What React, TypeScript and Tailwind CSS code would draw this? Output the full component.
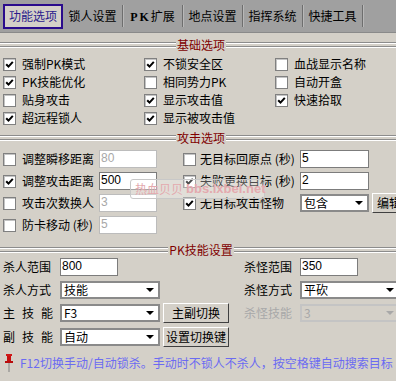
import type { ReactNode } from 'react';

const tabs = ['功能选项', '锁人设置', 'PK扩展', '地点设置', '指挥系统', '快捷工具'];

// 经典 Win32 复选框
function Check({ on }: { on?: boolean }) {
  return (
    <span className="w-[13px] h-[13px] shrink-0 bg-white border border-[#808080] shadow-[inset_1px_1px_0_#c4c4c4] flex items-center justify-center">
      {on && (
        <svg width="9" height="9" viewBox="0 0 9 9">
          <path d="M1.2 4.2 L3.5 6.6 L7.8 1.8" stroke="#000" strokeWidth="2" fill="none" />
        </svg>
      )}
    </span>
  );
}

function Etch() {
  return (
    <div className="flex-1 flex flex-col gap-[2px]">
      <div className="h-[2px] border-t border-t-[#8c8c8c] border-b border-b-white" />
      <div className="h-[2px] border-t border-t-[#8c8c8c] border-b border-b-white" />
    </div>
  );
}

function Header({ title }: { title: string }) {
  return (
    <div className="flex items-center h-[14px]">
      <Etch />
      <span className="text-[#800000] px-[1px]">{title}</span>
      <Etch />
    </div>
  );
}

function TextBox({ value, w, disabled }: { value: string; w: string; disabled?: boolean }) {
  return (
    <div
      className={`${w} h-[18px] shrink-0 bg-white border px-[1px] leading-[15px] font-['Liberation_Sans',sans-serif] text-[12px] ${
        disabled ? 'border-[#bcbcbc] text-[#a8a8a8]' : 'border-[#7c7c7c] text-black'
      }`}
    >
      {value}
    </div>
  );
}

function Select({ value, w, disabled }: { value: string; w: string; disabled?: boolean }) {
  return (
    <div
      className={`${w} h-[18px] shrink-0 border-2 flex items-center justify-between pl-[2px] pr-[4px] ${
        disabled ? 'bg-[#d4d0c8] border-[#c4c4c4] text-[#a8a8a8]' : 'bg-white border-[#8a8a8a] text-black'
      }`}
    >
      <span className="leading-[14px]">{value}</span>
      <svg width="8" height="4" viewBox="0 0 8 4">
        <path d="M0 0 H8 L4 4 Z" fill={disabled ? '#a8a8a8' : '#000'} />
      </svg>
    </div>
  );
}

function Btn({ children, w }: { children: ReactNode; w: string }) {
  return (
    <div className={`${w} h-[20px] shrink-0 bg-[#d4d0c8] border border-t-white border-l-white border-b-[#404040] border-r-[#404040] flex items-center justify-center`}>
      {children}
    </div>
  );
}

function Spaced({ text }: { text: string }) {
  return (
    <span className="w-[50px] flex justify-between">
      {text.split('').map((c, i) => (
        <span key={i}>{c}</span>
      ))}
    </span>
  );
}

const basic: [string, boolean][][] = [
  [['强制PK模式', true], ['不锁安全区', true], ['血战显示名称', false]],
  [['PK技能优化', true], ['相同势力PK', false], ['自动开盒', false]],
  [['贴身攻击', false], ['显示攻击值', true], ['快速拾取', true]],
  [['超远程锁人', true], ['显示被攻击值', true]],
];

export default function App() {
  return (
    <div className="w-[396px] h-[381px] overflow-hidden bg-[#d4d0c8] text-[12px] leading-[14px] text-black font-['Noto_Sans_CJK_SC',sans-serif]">
      {/* 标签栏 */}
      <div className="h-[33px] bg-[#a0a0a0] border-b border-[#8a8a8a] flex items-center pl-[3px]">
        {tabs.map((t, i) =>
          i === 0 ? (
            <div key={t} className="w-[60px] h-[25px] bg-[#d4d0c8] border-2 border-[#2a0c8c] text-[#2a1a8c] flex items-center justify-center">
              {t}
            </div>
          ) : (
            <div key={t} className="w-[60px] h-[22px] flex items-center justify-center border-r border-[#6e6e6e] shadow-[1px_0_0_#b8b8b8]">
              {t === 'PK扩展' ? (
                <span>
                  <b className="font-['Liberation_Serif',serif] tracking-[2px]">PK</b>扩展
                </span>
              ) : (
                t
              )}
            </div>
          )
        )}
      </div>

      <div className="w-[402px]">
        {/* 基础选项 */}
        <div className="mt-[5px]">
          <Header title="基础选项" />
        </div>
        <div className="mt-[3px] pl-[3px] grid grid-cols-[141px_131px_1fr]">
          {basic.flatMap((row, r) =>
            row.map(([label, on], c) => (
              <div key={`${r}-${c}`} className="h-[18px] flex items-center gap-[6px]">
                <Check on={on} />
                <span>{label}</span>
              </div>
            ))
          )}
        </div>

        {/* 攻击选项 */}
        <div className="mt-[4px]">
          <Header title="攻击选项" />
        </div>
        <div className="relative mt-[3px] pl-[3px]">
          {[
            { l: '调整瞬移距离', lv: '80', ld: true, lon: false, r: '无目标回原点 (秒)', ron: false, rc: <TextBox value="5" w="w-[69px]" /> },
            { l: '调整攻击距离', lv: '500', ld: false, lon: true, r: '失败更换目标 (秒)', ron: true, rc: <TextBox value="2" w="w-[69px]" /> },
            {
              l: '攻击次数换人', lv: '3', ld: true, lon: false, r: '无目标攻击怪物', ron: true,
              rc: (
                <div className="flex items-center gap-[3px]">
                  <Select value="包含" w="w-[69px]" />
                  <Btn w="w-[34px]">编辑</Btn>
                </div>
              ),
            },
            { l: '防卡移动 (秒)', lv: '5', ld: true, lon: false },
          ].map((row) => (
            <div key={row.l} className="h-[22px] flex items-center">
              <div className="w-[180px] flex items-center shrink-0">
                <Check on={row.lon} />
                <span className="ml-[6px] w-[77px] whitespace-nowrap">{row.l}</span>
                <TextBox value={row.lv} w="w-[58px]" disabled={row.ld} />
              </div>
              {row.r && (
                <div className="flex items-center">
                  <Check on={row.ron} />
                  <span className="ml-[4px] w-[100px] whitespace-nowrap">{row.r}</span>
                  {row.rc}
                </div>
              )}
            </div>
          ))}
          {/* 水印 */}
          <div className="absolute left-[130px] top-[31px] w-[135px] h-[20px] rounded-[3px] border border-[#c8c8c8] bg-white/30 flex items-center pl-[4px] gap-[3px] text-[#e4a9ae] whitespace-nowrap">
            <span>热血贝贝</span>
            <b className="font-['Liberation_Sans',sans-serif] text-[13px]">bbs.lxbei.net</b>
          </div>
        </div>

        {/* PK技能设置 */}
        <div className="mt-[7px]">
          <Header title="PK技能设置" />
        </div>
        <div className="mt-[-2px] pl-[3px]">
          <div className="h-[23px] flex items-center">
            <span className="w-[57px]">杀人范围</span>
            <div className="w-[183px]">
              <TextBox value="800" w="w-[58px]" />
            </div>
            <span className="w-[49px] text-right">杀怪范围</span>
            <span className="ml-[8px]">
              <TextBox value="350" w="w-[58px]" />
            </span>
          </div>
          <div className="h-[23px] flex items-center">
            <span className="w-[57px]">杀人方式</span>
            <div className="w-[183px]">
              <Select value="技能" w="w-[100px]" />
            </div>
            <span className="w-[49px] text-right">杀怪方式</span>
            <span className="ml-[8px]">
              <Select value="平砍" w="w-[100px]" />
            </span>
          </div>
          <div className="h-[23px] flex items-center">
            <span className="w-[57px]">
              <Spaced text="主技能" />
            </span>
            <div className="w-[183px] flex items-center gap-[3px]">
              <Select value="F3" w="w-[100px]" />
              <Btn w="w-[66px]">主副切换</Btn>
            </div>
            <span className="w-[49px] text-right text-[#a8a8a8]">杀怪技能</span>
            <span className="ml-[8px]">
              <Select value="3" w="w-[100px]" disabled />
            </span>
          </div>
          <div className="h-[23px] mt-[1px] flex items-center">
            <span className="w-[57px]">
              <Spaced text="副技能" />
            </span>
            <div className="w-[183px] flex items-center gap-[3px]">
              <Select value="自动" w="w-[100px]" />
              <Btn w="w-[66px]">设置切换键</Btn>
            </div>
          </div>
        </div>

        {/* 提示 */}
        <div className="mt-[7px] h-[16px] pl-[5px] flex items-center gap-[7px] text-[#6b6bf2] whitespace-nowrap">
          <svg width="8" height="18" viewBox="0 0 8 18">
            <rect x="1" y="0" width="6" height="2" fill="#d01818" />
            <rect x="2" y="2" width="4" height="5" fill="#c81010" />
            <rect x="0" y="7" width="8" height="2" fill="#b80c0c" />
            <rect x="3.5" y="9" width="1" height="9" fill="#808080" />
          </svg>
          <span>F12切换手动/自动锁杀。手动时不锁人不杀人，按空格键自动搜索目标</span>
        </div>
      </div>
    </div>
  );
}
